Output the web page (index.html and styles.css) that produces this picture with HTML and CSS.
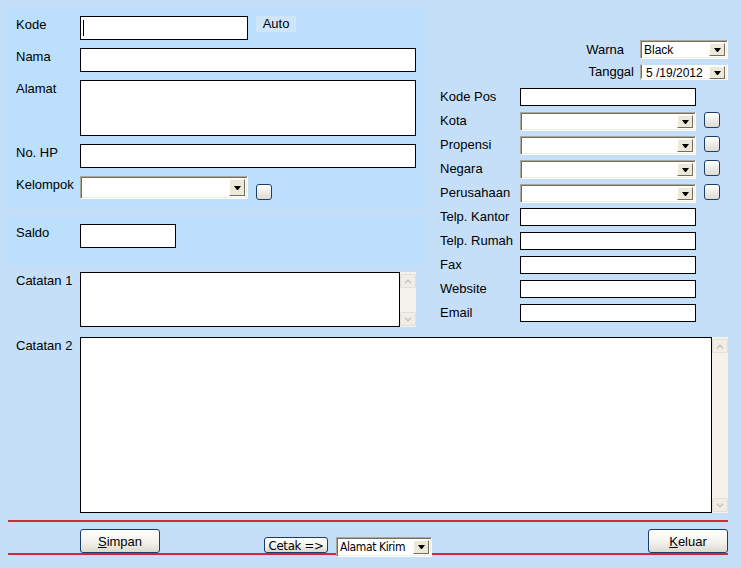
FILE: index.html
```html
<!DOCTYPE html>
<html lang="id">
<head>
  <meta charset="UTF-8">
  <meta name="viewport" content="width=device-width, initial-scale=1.0">
  <title>Data Kontak</title>
  <link rel="stylesheet" href="styles.css">
</head>
<body>
  <div class="form">
    <div class="top">
      <div class="left">
        <div class="panel">
          <div class="row">
            <span class="lbl">Kode</span>
            <div class="box w168"><span class="caret"></span></div>
            <span class="auto">Auto</span>
          </div>
          <div class="row">
            <span class="lbl">Nama</span>
            <div class="box wide"></div>
          </div>
          <div class="row">
            <span class="lbl">Alamat</span>
            <div class="box wide tall"></div>
          </div>
          <div class="row">
            <span class="lbl">No. HP</span>
            <div class="box wide"></div>
          </div>
          <div class="row">
            <span class="lbl">Kelompok</span>
            <div class="combo w168 big"><span class="val"></span><span class="drop"></span></div>
            <span class="check low"></span>
          </div>
        </div>

        <div class="panel saldo">
          <div class="row">
            <span class="lbl">Saldo</span>
            <div class="box w96"></div>
          </div>
        </div>

        <div class="row note">
          <span class="lbl">Catatan 1</span>
          <div class="memo short">
            <div class="area"></div>
            <div class="sb">
              <span class="sb-btn"><svg width="8" height="5" viewBox="0 0 8 5"><path d="M1 4.2 L4 1.2 L7 4.2" fill="none" stroke="#c4c1b5" stroke-width="1.3"/></svg></span>
              <span class="sb-btn"><svg width="8" height="5" viewBox="0 0 8 5"><path d="M1 0.8 L4 3.8 L7 0.8" fill="none" stroke="#c4c1b5" stroke-width="1.3"/></svg></span>
            </div>
          </div>
        </div>
      </div>

      <div class="right">
        <div class="picks">
          <div class="pick">
            <span class="plbl warna">Warna</span>
            <div class="combo w88"><span class="val">Black</span><span class="drop"></span></div>
          </div>
          <div class="pick">
            <span class="plbl">Tanggal</span>
            <div class="combo date w88"><span class="val">5 /19/2012</span><span class="drop"></span></div>
          </div>
        </div>

        <div class="fields">
          <div class="frow"><span class="flbl">Kode Pos</span><div class="box fbox"></div></div>
          <div class="frow"><span class="flbl">Kota</span><div class="combo fbox"><span class="val"></span><span class="drop"></span></div><span class="check"></span></div>
          <div class="frow"><span class="flbl">Propensi</span><div class="combo fbox"><span class="val"></span><span class="drop"></span></div><span class="check"></span></div>
          <div class="frow"><span class="flbl">Negara</span><div class="combo fbox"><span class="val"></span><span class="drop"></span></div><span class="check"></span></div>
          <div class="frow"><span class="flbl">Perusahaan</span><div class="combo fbox"><span class="val"></span><span class="drop"></span></div><span class="check"></span></div>
          <div class="frow"><span class="flbl">Telp. Kantor</span><div class="box fbox"></div></div>
          <div class="frow"><span class="flbl">Telp. Rumah</span><div class="box fbox"></div></div>
          <div class="frow"><span class="flbl">Fax</span><div class="box fbox"></div></div>
          <div class="frow"><span class="flbl">Website</span><div class="box fbox"></div></div>
          <div class="frow"><span class="flbl">Email</span><div class="box fbox"></div></div>
        </div>
      </div>
    </div>

    <div class="row note big-note">
      <span class="lbl">Catatan 2</span>
      <div class="memo long">
        <div class="area"></div>
        <div class="sb">
          <span class="sb-btn"><svg width="8" height="5" viewBox="0 0 8 5"><path d="M1 4.2 L4 1.2 L7 4.2" fill="none" stroke="#c4c1b5" stroke-width="1.3"/></svg></span>
          <span class="sb-btn"><svg width="8" height="5" viewBox="0 0 8 5"><path d="M1 0.8 L4 3.8 L7 0.8" fill="none" stroke="#c4c1b5" stroke-width="1.3"/></svg></span>
        </div>
      </div>
    </div>

    <div class="rule"></div>
    <div class="bar">
      <button class="btn simpan"><u>S</u>impan</button>
      <button class="btn cetak">Cetak =&gt;</button>
      <div class="combo kirim"><span class="val">Alamat Kirim</span><span class="drop"></span></div>
      <button class="btn keluar"><u>K</u>eluar</button>
    </div>
    <div class="rule"></div>
  </div>
</body>
</html>
```

FILE: styles.css
```css
body {
  margin: 0;
  width: 741px;
  height: 568px;
  overflow: hidden;
  background-color: #c6dff9;
  font-family: "Liberation Sans", Arial, sans-serif;
  font-size: 13px;
  color: #000;
}

.form {
  padding: 8px 13px 0 8px;
}

.top {
  display: flex;
}

.left {
  width: 417px;
  flex: none;
  display: flex;
  flex-direction: column;
  gap: 7px;
}

.panel {
  background-color: #bbdffc;
  padding: 8px 9px 9px 8px;
  display: flex;
  flex-direction: column;
  gap: 8px;
}

.panel.saldo {
  padding-bottom: 17px;
}

.row {
  display: flex;
  align-items: flex-start;
}

.lbl {
  width: 64px;
  flex: none;
  line-height: 16px;
  padding-top: 1px;
}

.box {
  box-sizing: border-box;
  height: 24px;
  border: 1px solid #000;
  background-color: #fff;
}

.box.wide {
  flex: 1;
}

.box.tall {
  height: 56px;
}

.w168 {
  width: 168px;
}

.w96 {
  width: 96px;
}

.w88 {
  width: 88px;
}

.caret {
  display: block;
  width: 1px;
  height: 16px;
  margin: 3px 0 0 2px;
  background-color: #000;
}

.auto {
  width: 40px;
  height: 16px;
  margin-left: 8px;
  line-height: 16px;
  text-align: center;
  background-color: #cfe5fa;
}

.check {
  box-sizing: border-box;
  width: 16px;
  height: 16px;
  margin-left: 8px;
  border: 1px solid #1f3f66;
  border-radius: 3px;
  background: linear-gradient(#ffffff, #dedbd0);
  flex: none;
}

.check.low {
  margin-top: 8px;
}

/* combo box, XP classic */
.combo {
  box-sizing: border-box;
  display: flex;
  height: 19px;
  padding: 2px;
  background-color: #fff;
  border: 1px solid;
  border-color: #aca899 #fff #fff #aca899;
  box-shadow: inset 1px 1px 0 #716f64, inset -1px -1px 0 #f1efe2;
  font-size: 12px;
}

.combo.big {
  height: 23px;
}

.combo .val {
  flex: 1;
  padding-left: 1px;
  line-height: 14px;
  overflow: hidden;
  white-space: nowrap;
}

.combo .drop {
  box-sizing: border-box;
  width: 16px;
  flex: none;
  display: flex;
  align-items: center;
  justify-content: center;
  background-color: #ece9d8;
  border: 1px solid;
  border-color: #fff #716f64 #716f64 #fff;
}

.combo .drop::after {
  content: "";
  width: 1px;
  border-left: 3px solid transparent;
  border-right: 3px solid transparent;
  border-top: 4px solid #000;
}

.combo.date {
  height: 16px;
  padding: 1px 2px 0 2px;
  border-top-color: #c6dff9;
  box-shadow: inset -1px -1px 0 #f1efe2, inset 1px 0 0 #716f64;
}

.combo.date .val {
  line-height: 14px;
  padding-left: 3px;
}

.combo.date .drop {
  height: 13px;
}

/* memo with disabled scroll bar */
.note {
  padding-left: 8px;
}

.memo {
  display: flex;
  width: 336px;
  height: 55px;
}

.memo .area {
  flex: 1;
  border: 1px solid #000;
  background-color: #fff;
}

.sb {
  width: 16px;
  flex: none;
  display: flex;
  flex-direction: column;
  justify-content: space-between;
  padding: 2px 0 1px;
  box-sizing: border-box;
  background-color: #f4f2ea;
}

.sb-btn {
  box-sizing: border-box;
  width: 16px;
  height: 14px;
  display: flex;
  align-items: center;
  justify-content: center;
  border: 1px solid #e2dfd4;
  border-radius: 2px;
  background-color: #efede5;
}

.big-note {
  margin-top: 9px;
}

.memo.long {
  flex: 1;
  width: auto;
  height: 176px;
}

/* right column */
.right {
  flex: 1;
  padding: 32px 0 0 15px;
}

.picks {
  display: flex;
  flex-direction: column;
  align-items: flex-end;
  gap: 5px;
}

.pick {
  display: flex;
  align-items: center;
}

.plbl {
  margin-right: 6px;
  line-height: 16px;
}

.plbl.warna {
  margin-right: 16px;
}

.fields {
  margin-top: 8px;
}

.frow {
  display: flex;
  align-items: flex-start;
  height: 18px;
  margin-bottom: 6px;
}

.flbl {
  width: 80px;
  flex: none;
  line-height: 18px;
  white-space: nowrap;
}

.fbox {
  width: 176px;
  height: 18px;
}

.combo.fbox {
  height: 19px;
}

/* footer */
.rule {
  height: 2px;
  margin-top: 7px;
  background-color: #cc2a3a;
}

.bar {
  display: flex;
  align-items: flex-start;
  height: 31px;
  padding-top: 7px;
  box-sizing: border-box;
}

.bar + .rule {
  margin-top: 0;
}

.btn {
  box-sizing: border-box;
  width: 80px;
  height: 24px;
  padding: 0;
  border: 1px solid #1d3b6a;
  border-radius: 3px;
  background: linear-gradient(#ffffff, #f3f2ec 55%, #dcd9cd);
  font-family: "Liberation Sans", Arial, sans-serif;
  font-size: 13px;
  color: #000;
}

.btn.simpan {
  margin-left: 72px;
}

.btn.cetak {
  width: 64px;
  height: 16px;
  margin: 8px 0 0 104px;
  line-height: 13px;
  font-family: "DejaVu Sans Condensed", "DejaVu Sans", sans-serif;
  font-stretch: condensed;
  font-size: 13px;
  letter-spacing: -0.3px;
}

.combo.kirim {
  width: 96px;
  height: 20px;
  margin: 8px 0 0 8px;
  font-family: "DejaVu Sans Condensed", "DejaVu Sans", sans-serif;
  font-stretch: condensed;
  font-size: 12px;
  letter-spacing: -0.4px;
}

.btn.keluar {
  margin-left: auto;
}
```
